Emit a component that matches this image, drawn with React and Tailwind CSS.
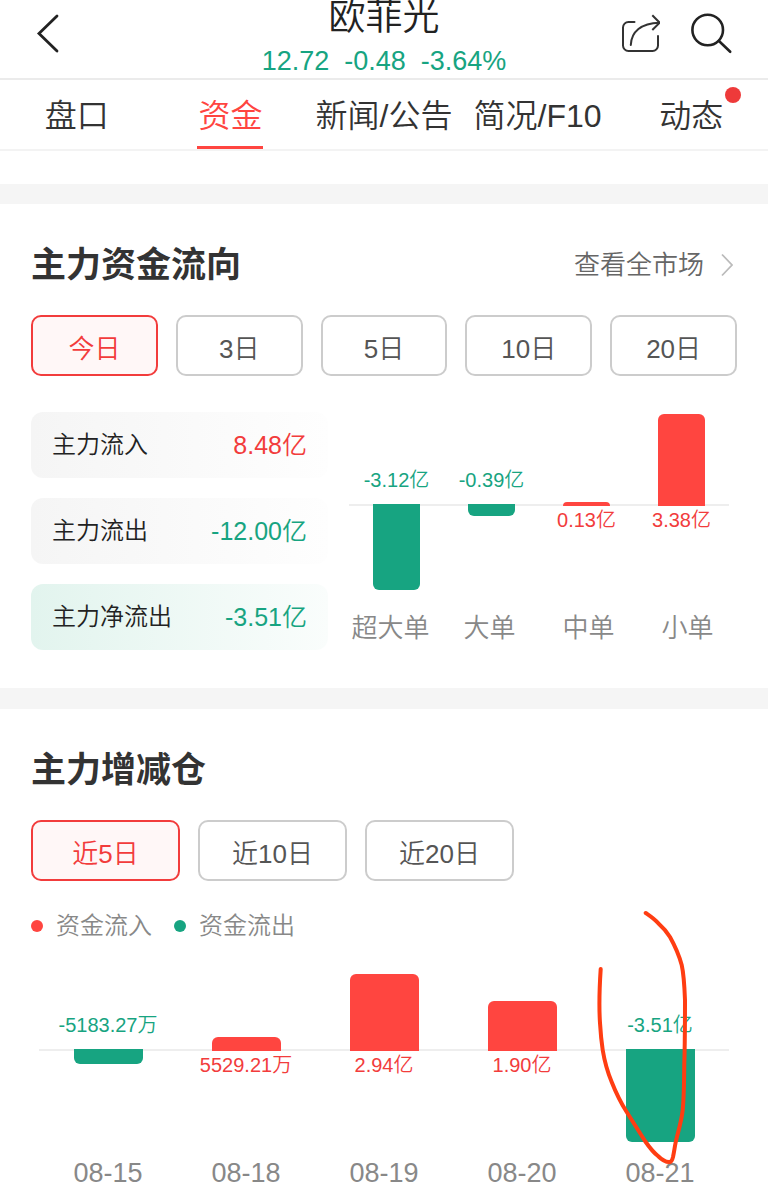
import React from 'react';
import clsx from 'clsx';

const TABS = ['盘口', '资金', '新闻/公告', '简况/F10', '动态'];

const FLOW_RANGES = ['今日', '3日', '5日', '10日', '20日'];

const FLOW_SUMMARY = [
  { label: '主力流入', value: '8.48亿', up: true },
  { label: '主力流出', value: '-12.00亿', up: false },
  { label: '主力净流出', value: '-3.51亿', up: false, highlight: true },
];

const FLOW_BY_SIZE = [
  { label: '超大单', amount: -3.12, text: '-3.12亿' },
  { label: '大单', amount: -0.39, text: '-0.39亿' },
  { label: '中单', amount: 0.13, text: '0.13亿' },
  { label: '小单', amount: 3.38, text: '3.38亿' },
];

const POSITION_RANGES = ['近5日', '近10日', '近20日'];

const POSITION_BY_DAY = [
  { label: '08-15', amount: -0.518327, text: '-5183.27万' },
  { label: '08-18', amount: 0.552921, text: '5529.21万' },
  { label: '08-19', amount: 2.94, text: '2.94亿' },
  { label: '08-20', amount: 1.9, text: '1.90亿' },
  { label: '08-21', amount: -3.51, text: '-3.51亿' },
];

const MAX_BAR = 92;
const MIN_BAR = 4;

const BackIcon = () => (
  <svg className="w-6 h-10" viewBox="0 0 24 40" fill="none" stroke="#222" strokeWidth="2.8">
    <path d="M21 3 3 20.500l18 17.500" strokeLinecap="round" />
  </svg>
);

const ShareIcon = () => (
  <svg className="w-10 h-10" viewBox="0 0 40 40" fill="none" stroke="#333" strokeWidth="2">
    <path d="M14.500 9H8.500a5.500 5.500 0 0 0-5.500 5.500v18a5.500 5.500 0 0 0 5.500 5.500h24a5.500 5.500 0 0 0 5.500-5.500V23" strokeLinecap="round" />
    <path d="M10.800 32C11.300 19 21 10 39.500 9.700" strokeLinecap="round" />
    <path d="M32.300 2.300 39.700 9.700 32.300 17" />
  </svg>
);

const SearchIcon = () => (
  <svg className="w-10 h-10 overflow-visible" viewBox="0 0 40 40" fill="none" stroke="#222" strokeWidth="2.6">
    <circle cx="15.700" cy="17" r="15.300" />
    <path d="m26.700 27.800 11.500 11" strokeLinecap="round" />
  </svg>
);

const Header = () => (
  <header className="flex h-20 justify-between border-b-2 border-[#ebebeb] px-9">
    <div className="flex flex-1 items-center pb-3">
      <button type="button" aria-label="返回">
        <BackIcon />
      </button>
    </div>
    <div className="flex flex-col items-center">
      <h1 className="text-[37px] leading-9 text-[#222]">欧菲光</h1>
      <p className="mt-[9px] flex gap-[15px] text-[27px] leading-8 text-[#17a481]">
        <span>12.72</span>
        <span>-0.48</span>
        <span>-3.64%</span>
      </p>
    </div>
    <div className="flex flex-1 items-center justify-end gap-8 pb-3">
      <button type="button" aria-label="分享">
        <ShareIcon />
      </button>
      <button type="button" aria-label="搜索">
        <SearchIcon />
      </button>
    </div>
  </header>
);

const TabBar = () => {
  const [active, setActive] = React.useState('资金');

  return (
    <nav className="grid h-[71px] grid-cols-5 border-b-2 border-[#f3f3f3]">
      {TABS.map((tab) => (
        <button
          key={tab}
          type="button"
          onClick={() => setActive(tab)}
          className={clsx(
            'flex justify-center whitespace-nowrap text-[32px] leading-[60px]',
            tab === active ? 'text-[#ff4540]' : 'text-[#333]'
          )}
        >
          <span className={clsx('relative h-full px-px pt-1.5', tab === active && 'border-b-3 border-[#ff4540]')}>
            {tab}
            {tab === '动态' && (
              <span className="absolute top-[7px] -right-[17px] size-4 rounded-full bg-[#ee3a3a]" />
            )}
          </span>
        </button>
      ))}
    </nav>
  );
};

const RangeButton = ({ label, active, onClick, className }) => (
  <button
    type="button"
    onClick={onClick}
    className={clsx(
      'h-[61px] rounded-[10px] border-2 pt-1.5 text-[26px] leading-8',
      active ? 'border-[#f23c3c] bg-[#fff7f7] text-[#f23c3c]' : 'border-[#ccc] bg-white text-[#555]',
      className
    )}
  >
    {label}
  </button>
);

const Bar = ({ height, up, className }) => (
  <div
    className={clsx('w-1/2 shrink-0', up ? 'rounded-t-md bg-[#ff4540]' : 'rounded-b-md bg-[#17a481]', className)}
    style={{ height }}
  />
);

const BarChart = ({ data }) => {
  const max = Math.max(...data.map((d) => Math.abs(d.amount)));

  return (
    <div className="mx-2 flex">
      {data.map(({ label, amount, text }) => {
        const up = amount > 0;
        const height = Math.max(MIN_BAR, Math.round((Math.abs(amount) / max) * MAX_BAR));

        return (
          <div key={label} className="min-w-0 flex-1 whitespace-nowrap text-[20px] leading-6">
            <div className="flex h-[94px] flex-col items-center justify-end border-b-2 border-[#eee]">
              {up ? (
                <Bar height={height} up className="-mb-[2px]" />
              ) : (
                <span className="pb-3 text-[#17a481]">{text}</span>
              )}
            </div>
            <div className="flex h-[104px] flex-col items-center">
              {up ? (
                <span className="pt-[2px] text-[#f23c3c]">{text}</span>
              ) : (
                <Bar height={height + 1} className="-mt-[2px]" />
              )}
            </div>
          </div>
        );
      })}
    </div>
  );
};

// Hand-drawn loop over the latest day
const PenMark = () => (
  <svg
    className="pointer-events-none absolute -top-[52px] right-2 h-[265px] w-[138px]"
    viewBox="0 0 138 265"
    fill="none"
    stroke="#ff3d12"
    strokeWidth="4"
    strokeLinecap="round"
    strokeLinejoin="round"
  >
    <path d="M9.700 64C8.300 85 8 103 9 118C9.600 128 10.500 137 11.700 145C13.500 156 16.500 167 20.700 177C25 188 30 198 35.700 207L54 236C58.500 242.500 62.500 247.500 67 251C71 255 75 257.500 79 257C81 256.500 81.500 254 82 252C83.500 245 84 239 85.700 233C88.500 222 91 213 91.700 205C93.300 189 93 173 93.300 158C94 137 94 116 94 95C93.500 82 93 70 90.700 60C88 50 84 41 79 32C76 27 72 22.500 67 18C63.500 14 59 11 54.700 8" />
  </svg>
);

const FundFlow = () => {
  const [range, setRange] = React.useState('今日');

  return (
    <section className="px-[31px] pt-[37px] pb-[38px]">
      <div className="flex items-center justify-between">
        <h2 className="text-[35px] leading-[48px] font-bold text-[#333]">主力资金流向</h2>
        <a href="#market" className="flex items-center gap-[17px] text-[26px] leading-[48px] text-[#666]">
          查看全市场
          <svg className="mr-1 h-6 w-3" viewBox="0 0 12 24" fill="none" stroke="#bbb" strokeWidth="1.8">
            <path d="m1 1.500 10 10.500-10 10.500" />
          </svg>
        </a>
      </div>

      <div className="mt-[26px] grid grid-cols-5 gap-[18px]">
        {FLOW_RANGES.map((r) => (
          <RangeButton key={r} label={r} active={r === range} onClick={() => setRange(r)} />
        ))}
      </div>

      <div className="mt-9 flex gap-[13px]">
        <dl className="flex flex-3 flex-col gap-5">
          {FLOW_SUMMARY.map(({ label, value, up, highlight }) => (
            <div
              key={label}
              className={clsx(
                'flex h-[66px] items-center justify-between rounded-xl bg-linear-to-r px-[21px] leading-8',
                highlight ? 'from-[#e2f4ee] to-[#fafdfc]' : 'from-[#f5f5f5] to-[#fefefe]'
              )}
            >
              <dt className="text-[24px] text-[#222]">{label}</dt>
              <dd className={clsx('text-[25px]', up ? 'text-[#f23c3c]' : 'text-[#17a481]')}>{value}</dd>
            </div>
          ))}
        </dl>
        <div className="flex-4">
          <BarChart data={FLOW_BY_SIZE} />
          <div className="flex text-center text-[26px] leading-9 text-[#888]">
            {FLOW_BY_SIZE.map(({ label }) => (
              <span key={label} className="flex-1">{label}</span>
            ))}
          </div>
        </div>
      </div>
    </section>
  );
};

const LegendItem = ({ color, label }) => (
  <span className="flex items-center gap-[13px]">
    <span className={clsx('size-3 rounded-full', color)} />
    {label}
  </span>
);

const PositionChange = () => {
  const [range, setRange] = React.useState('近5日');

  return (
    <section className="px-[31px] pt-[37px] pb-2">
      <h2 className="text-[35px] leading-[48px] font-bold text-[#333]">主力增减仓</h2>

      <div className="mt-[26px] flex gap-[18px]">
        {POSITION_RANGES.map((r) => (
          <RangeButton
            key={r}
            label={r}
            active={r === range}
            onClick={() => setRange(r)}
            className="w-[149px]"
          />
        ))}
      </div>

      <div className="mt-[27px] flex gap-[22px] text-[24px] leading-9 text-[#888]">
        <LegendItem color="bg-[#ff4540]" label="资金流入" />
        <LegendItem color="bg-[#17a481]" label="资金流出" />
      </div>

      <div className="relative mt-[13px]">
        <BarChart data={POSITION_BY_DAY} />
        <div className="mx-2 flex text-center text-[27px] leading-9 text-[#888]">
          {POSITION_BY_DAY.map(({ label }) => (
            <span key={label} className="flex-1">{label}</span>
          ))}
        </div>
        <PenMark />
      </div>
    </section>
  );
};

export default function App() {
  return (
    <div className="min-h-screen bg-white font-['Liberation_Sans','Noto_Sans_CJK_SC',sans-serif] font-[350]">
      <Header />
      <TabBar />
      <main>
        <div className="mt-[33px] h-5 bg-[#f5f5f5]" />
        <FundFlow />
        <div className="h-[21px] bg-[#f5f5f5]" />
        <PositionChange />
      </main>
    </div>
  );
}
